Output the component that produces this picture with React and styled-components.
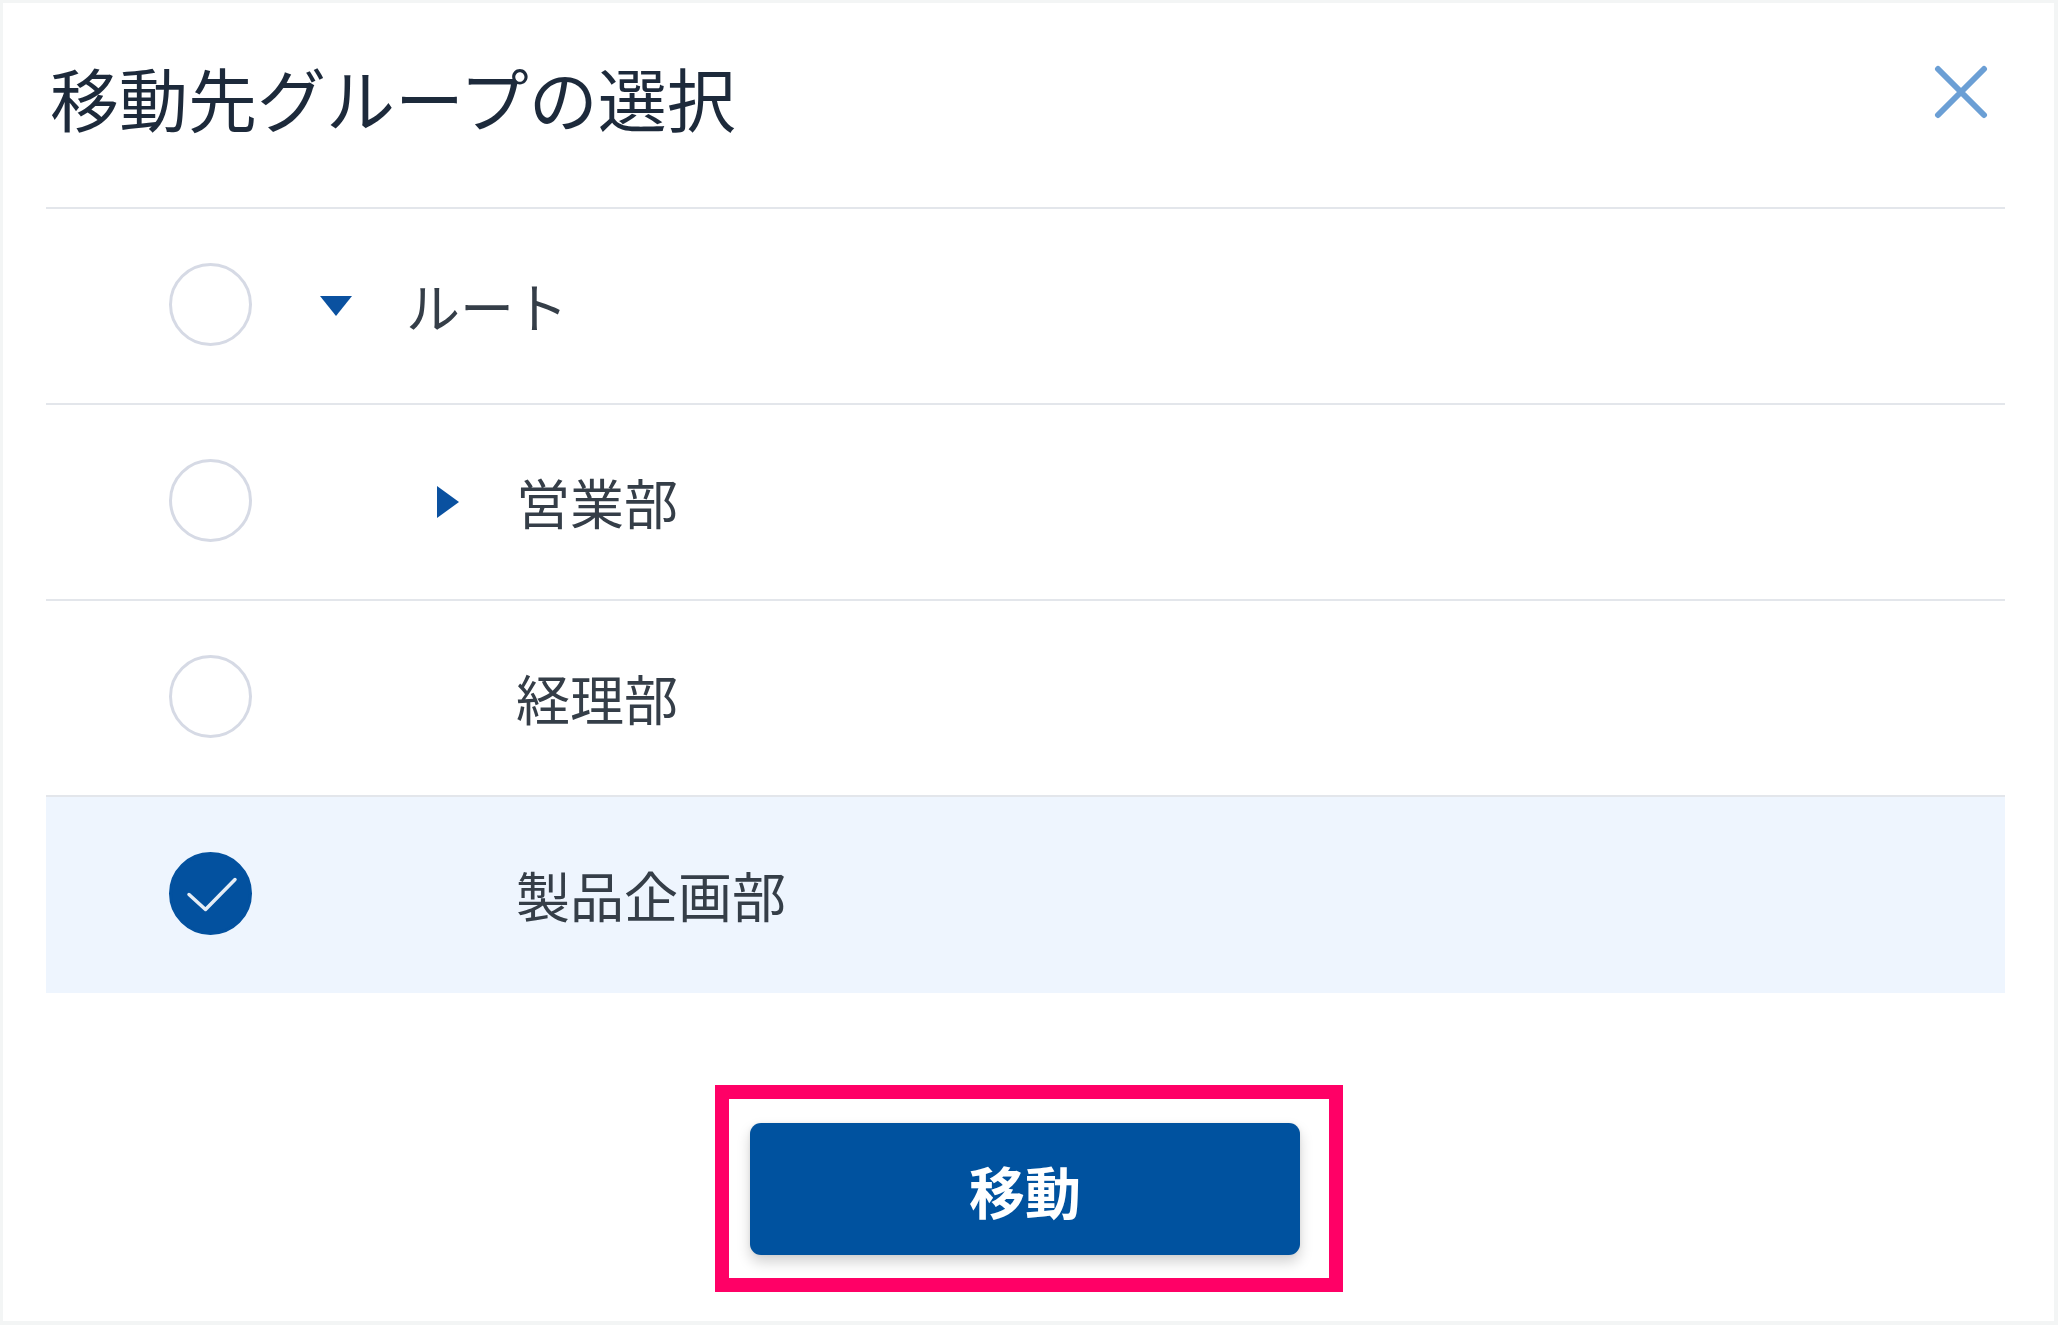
import React from "react";
import styled, { createGlobalStyle } from "styled-components";

const GlobalStyle = createGlobalStyle`
    html, body {
        margin: 0;
        padding: 0;
        background: #f3f5f5;
    }
    * {
        box-sizing: border-box;
    }
    body {
        font-family: "Noto Sans CJK JP", "Noto Sans", sans-serif;
    }
`;

const Dialog = styled.div`
    margin: 3px 4px 4px 3px;
    height: 1318px;
    background: #ffffff;
    padding: 0 49px 0 43px;
    display: flex;
    flex-direction: column;
`;

const Header = styled.div`
    display: flex;
    justify-content: space-between;
    align-items: flex-start;
    height: 206px;
    padding-top: 60px;
    border-bottom: 2px solid #e3e6eb;
`;

const Title = styled.h1`
    margin: 0 0 0 4px;
    font-size: 69px;
    line-height: 68px;
    font-weight: 400;
    color: #1d2a3b;
`;

const CloseButton = styled.button`
    width: 54px;
    height: 54px;
    margin: 2px 17px 0 0;
    padding: 0;
    border: none;
    background: none;
    cursor: pointer;
`;

const TreeList = styled.div`
    display: flex;
    flex-direction: column;
`;

const Row = styled.div`
    display: flex;
    align-items: center;
    height: 196px;
    padding-left: 123px;
    border-bottom: ${(p) => (p.$last ? "none" : "2px solid #e3e6eb")};
    background: ${(p) => (p.$selected ? "#eef5fe" : "transparent")};
`;

const Radio = styled.span`
    flex: none;
    width: 83px;
    height: 83px;
    margin-top: -3px;
    border-radius: 50%;
    border: 3px solid ${(p) => (p.$checked ? "#03519f" : "#d6dae5")};
    background: ${(p) => (p.$checked ? "#03519f" : "#ffffff")};
    display: flex;
    align-items: center;
    justify-content: center;
`;

const Toggle = styled.span`
    flex: none;
    width: 70px;
    height: 40px;
    margin-left: ${(p) => 49 + p.$level * 110}px;
    display: flex;
    align-items: center;
    justify-content: center;
`;

const Label = styled.span`
    margin-left: 35px;
    font-size: 54px;
    line-height: 54px;
    color: #353e48;
`;

const Footer = styled.div`
    display: flex;
    justify-content: center;
    padding-top: 92px;
`;

const Highlight = styled.div`
    margin-left: 7px;
    border: 14px solid #ff0066;
    padding: 24px 29px 23px 21px;
`;

const MoveButton = styled.button`
    width: 550px;
    height: 132px;
    border: none;
    border-radius: 11px;
    background: #00529f;
    color: #ffffff;
    font-family: "Noto Sans CJK JP", sans-serif;
    font-size: 56px;
    font-weight: 700;
    box-shadow: 0 7px 14px rgba(0, 0, 0, 0.18), 0 0 4px rgba(0, 0, 0, 0.06);
    cursor: pointer;
`;

const groups = [
    { name: "ルート", level: 0, toggle: "open" },
    { name: "営業部", level: 1, toggle: "closed" },
    { name: "経理部", level: 1 },
    { name: "製品企画部", level: 1, selected: true },
];

function Caret({ open }) {
    return open ? (
        <svg width="34" height="22" viewBox="0 0 34 22">
            <path d="M1 1 H33 L17 21 Z" fill="#0a51a0" />
        </svg>
    ) : (
        <svg width="26" height="32" viewBox="0 0 26 32">
            <path d="M4 0 L26 16 L4 32 Z" fill="#0a51a0" />
        </svg>
    );
}

function Check() {
    return (
        <svg width="54" height="40" viewBox="0 0 54 40">
            <path
                d="M5 20.5 L21.5 35.5 L51 5.5"
                fill="none"
                stroke="#e6edf6"
                strokeWidth="3.5"
                strokeLinecap="round"
                strokeLinejoin="round"
            />
        </svg>
    );
}

export default function App() {
    return (
        <>
            <GlobalStyle />
            <Dialog>
                <Header>
                    <Title>移動先グループの選択</Title>
                    <CloseButton aria-label="閉じる">
                        <svg width="54" height="54" viewBox="0 0 54 54">
                            <path
                                d="M4 4 L50 50 M50 4 L4 50"
                                stroke="#6b9fd5"
                                strokeWidth="6"
                                strokeLinecap="round"
                            />
                        </svg>
                    </CloseButton>
                </Header>

                <TreeList>
                    {groups.map((g, i) => (
                        <Row key={g.name} $selected={g.selected} $last={i === groups.length - 1}>
                            <Radio $checked={g.selected}>{g.selected && <Check />}</Radio>
                            <Toggle $level={g.level}>
                                {g.toggle && <Caret open={g.toggle === "open"} />}
                            </Toggle>
                            <Label>{g.name}</Label>
                        </Row>
                    ))}
                </TreeList>

                <Footer>
                    <Highlight>
                        <MoveButton>移動</MoveButton>
                    </Highlight>
                </Footer>
            </Dialog>
        </>
    );
}
